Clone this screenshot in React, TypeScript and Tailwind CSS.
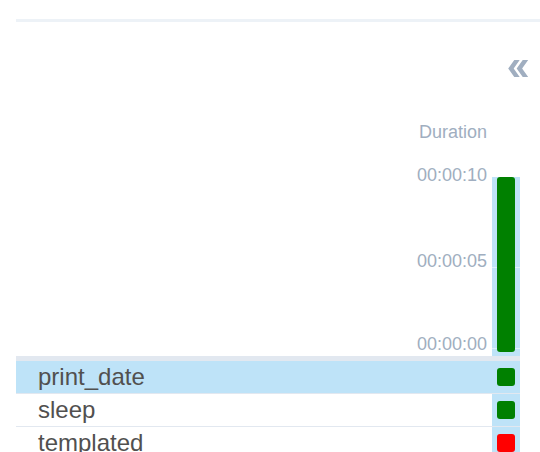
import { MdDoubleArrow } from "react-icons/md";

type Task = { id: string; state: "success" | "failed" };

const TASKS: Task[] = [
  { id: "print_date", state: "success" },
  { id: "sleep", state: "success" },
  { id: "templated", state: "failed" },
];

const SELECTED = "print_date";

const stateColor = (state: Task["state"]) =>
  state === "success" ? "bg-[#008000]" : "bg-[#ff0000]";

export default function App() {
  return (
    <div className="w-[540px] h-[452px] overflow-hidden bg-white font-['Liberation_Sans',Arial,sans-serif]">
      <div className="pt-[19px] pl-4">
        <div className="h-[3px] bg-[#edf2f7]" />
      </div>

      {/* collapse toggle */}
      <div className="flex justify-end pr-[7px] mt-[32px] h-[29px]">
        <MdDoubleArrow size={29} className="rotate-180 text-[#a0aec0]" />
      </div>

      <div className="pl-4 pr-5">
        {/* duration header */}
        <div className="flex h-[273px] items-end">
          <div className="flex-1 h-full flex flex-col items-end pr-[5px] text-[18px] leading-[20px] text-[#a0aec0]">
            <span className="mt-[39px]">Duration</span>
            <span className="mt-[23px]">00:00:10</span>
            <span className="mt-[66px]">00:00:05</span>
            <span className="mt-[63px]">00:00:00</span>
          </div>
          <div className="relative w-[28px] h-[179px] bg-[#bee3f8] px-[5px] pb-[4px]">
            <div className="absolute left-0 right-0 top-[90px] h-px bg-white/50" />
            <div className="absolute left-0 right-0 top-[171px] h-px bg-white/50" />
            <div className="relative h-full rounded-[3px] bg-[#008000]" />
          </div>
        </div>

        <div className="h-[5px] bg-[#e2e8f0]" />

        {/* task rows */}
        {TASKS.map((task) => {
          const selected = task.id === SELECTED;
          return (
            <div
              key={task.id}
              className={`flex h-[33px] border-b border-[#e2e8f0] ${
                selected ? "bg-[#bee3f8]" : "bg-white"
              }`}
            >
              <div className="flex-1 pl-[22px] text-[24px] leading-[32px] text-[#51504f]">
                {task.id}
              </div>
              <div className="w-[28px] h-full bg-[#bee3f8] flex justify-center pt-[7px]">
                <div className={`w-[18px] h-[18px] rounded-[3px] ${stateColor(task.state)}`} />
              </div>
            </div>
          );
        })}
      </div>
    </div>
  );
}
